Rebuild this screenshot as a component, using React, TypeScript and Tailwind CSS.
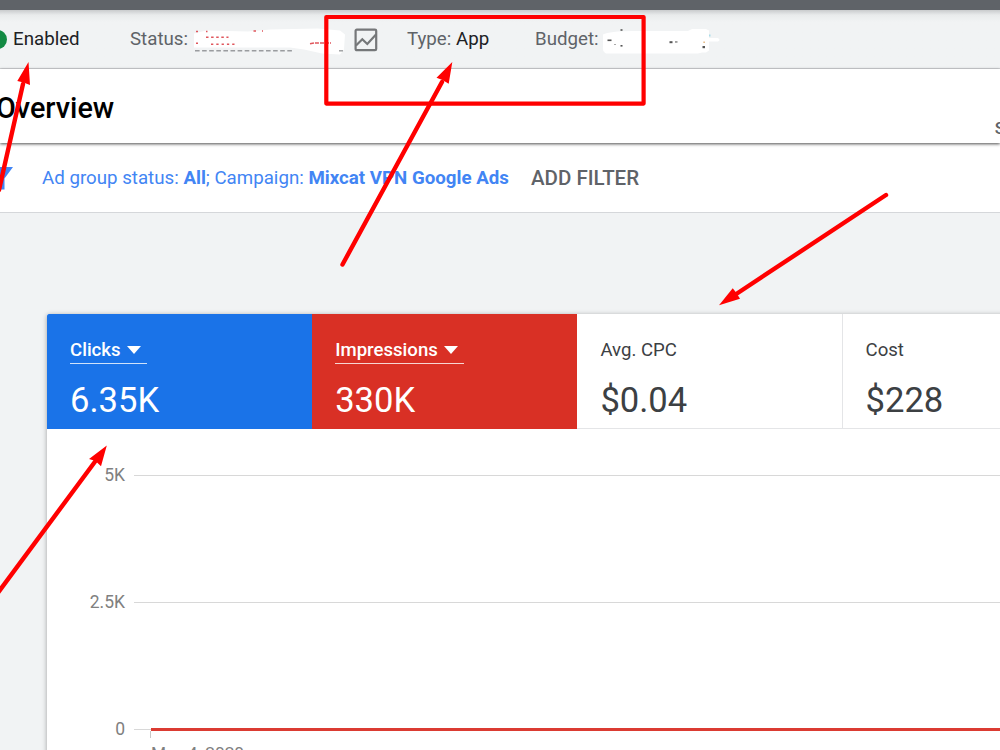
import type { ReactNode } from 'react';

interface Metric {
    label: string;
    value: string;
    selectable: boolean;
    tile: string;
}

interface ArrowProps {
    from: [number, number];
    to: [number, number];
    head: string;
}

const METRICS: Metric[] = [
    { label: 'Clicks', value: '6.35K', selectable: true, tile: 'bg-[#1a73e8] text-white rounded-tl-[2px]' },
    { label: 'Impressions', value: '330K', selectable: true, tile: 'bg-[#d93025] text-white' },
    { label: 'Avg. CPC', value: '$0.04', selectable: false, tile: 'bg-white text-[#3c4043] border-r border-b border-[#e4e5e7]' },
    { label: 'Cost', value: '$228', selectable: false, tile: 'bg-white text-[#3c4043] border-b border-[#e4e5e7]' },
];

const ARROWS: ArrowProps[] = [
    { from: [-1, 190], to: [23, 84], head: '28.5,62 17.3,81 23.5,82.5 30,85' },
    { from: [342.5, 264.5], to: [442, 82], head: '452.3,62 436.5,77.7 442.5,80 448.7,83.7' },
    { from: [886, 195], to: [737, 293.5], head: '719,305.2 732.7,288.3 736.5,293 740,298.7' },
    { from: [-3, 594], to: [95.5, 461], head: '106.8,445.5 89,459 95.5,461 101,466.3' },
];

const Arrow = ({ from, to, head }: ArrowProps) => (
    <g>
        <line x1={from[0]} y1={from[1]} x2={to[0]} y2={to[1]} stroke="#ff0000" strokeWidth="4.4" strokeLinecap="round" />
        <polygon points={head} fill="#ff0000" />
    </g>
);

const RedactedStatus = () => (
    <svg width="157" height="30" viewBox="190 25.5 157 30" className="shrink-0">
        <path
            d="M194 34 L206 31 L248 32 L270 30 L318 29 L340 31 L345 35 L344 50 L340 55 L322 54 L304 50 L290 48 L194 48 Z"
            fill="#fff"
        />
        <path d="M195 51.3H293" stroke="#9a9c9f" strokeWidth="1.4" strokeDasharray="4.6 2.5" />
        <path d="M339 51.3h4" stroke="#9a9c9f" strokeWidth="1.4" />
        <g fill="none" stroke="#e0565c" strokeWidth="1.5">
            <path d="M196 32h2M206 32h1.5M253.5 31.5h2.5M262 31.5h1" />
            <path d="M206 37.7h22.5" strokeDasharray="2.5 2.6" />
            <path d="M196 43.7h2M211 44.8h24" strokeDasharray="2.3 3" />
            <path d="M310 44.2l4-.7h5M320 43.5h11" strokeDasharray="4 1" />
        </g>
    </svg>
);

const RedactedBudget = () => (
    <svg width="122" height="34" viewBox="600 23.5 122 34" className="shrink-0">
        <path
            d="M603 35 Q610 31 640 31.5 L688 31.5 L692 29.5 H706 L709 31 V38.5 H718 Q721 40.5 718 42 H709 V51 L706 53 H702 L698 54 H606 Q602 52 603 46 Z"
            fill="#fff"
        />
        <g fill="#555">
            <rect x="607.5" y="40" width="4" height="1.6" />
            <rect x="620.5" y="29.7" width="2" height="1.6" />
            <rect x="620.5" y="45.5" width="2" height="1.6" />
            <rect x="614" y="44.5" width="2" height="1" opacity=".5" />
            <rect x="669.5" y="41.7" width="3" height="2" />
            <rect x="675" y="41.7" width="2.5" height="1.5" opacity=".7" />
            <rect x="702.5" y="46.5" width="2.5" height="2.2" />
            <rect x="703.5" y="42" width="1.2" height="1.5" fill="#d9a15c" />
            <rect x="709" y="35" width="1.5" height="2" fill="#a8dbe8" />
        </g>
    </svg>
);

const TrendIcon = () => (
    <svg width="24" height="24" viewBox="0 0 24 24" fill="none" stroke="#757779" strokeWidth="2.2" className="shrink-0">
        <rect x="1.6" y="1.6" width="20.6" height="20.6" rx="1.2" />
        <path d="M2 17.5L8.3 11.2L13.3 16L22 6.5" />
    </svg>
);

const InfoItem = ({ label, className, children }: { label: string; className: string; children?: ReactNode }) => (
    <div className={`flex shrink-0 items-center whitespace-pre pb-[2px] ${className}`}>
        <span className="text-[#5f6368]">{label}</span>
        {children}
    </div>
);

const StatusBar = () => (
    <div className="flex h-[59px] shrink-0 items-center overflow-hidden border-b border-[#d5d7da] bg-linear-to-b from-[#c9cbcd] via-[#e9ebec] via-[5px] to-[#f1f3f4] to-[12px] pt-[2px] text-[18.7px] leading-6">
        <div className="-ml-[12px] flex w-[142px] shrink-0 items-center gap-[6px] pb-[2px]">
            <span className="size-[19px] shrink-0 rounded-full bg-[#128a43]" />
            <span className="text-[#202124]">Enabled</span>
        </div>
        <InfoItem label="Status:" className="w-[60px]" />
        <RedactedStatus />
        <div className="ml-[7px] w-[53px] shrink-0">
            <TrendIcon />
        </div>
        <InfoItem label="Type: " className="w-[128px]">
            <span className="text-[#202124]">App</span>
        </InfoItem>
        <InfoItem label="Budget:" className="w-[65px]" />
        <RedactedBudget />
    </div>
);

const FilterBar = () => (
    <div className="flex h-[70px] shrink-0 items-center border-b border-[#d5d7da] bg-white text-[18.72px]">
        <svg width="14" height="24" viewBox="0 0 14 24" className="shrink-0">
            <path d="M-12 1H13L4.5 12.5V23.5H-3V12.5Z" fill="#4285f4" />
        </svg>
        <p className="ml-[28px] w-[489px] shrink-0 whitespace-nowrap pt-[2px] text-[#4285f4]">
            Ad group status: <b className="font-bold">All</b>; Campaign: <b className="font-bold">Mixcat VPN Google Ads</b>
        </p>
        <span className="whitespace-nowrap pt-[2px] text-[20.5px] font-medium text-[#5f6368]">ADD FILTER</span>
    </div>
);

const MetricTile = ({ label, value, selectable, tile }: Metric) => (
    <div className={`flex h-[115px] w-[265.2px] shrink-0 flex-col items-start pl-[23px] pt-[23px] ${tile}`}>
        <div className={`flex h-[27px] items-center gap-[6px] border-b text-[18.6px] ${selectable ? 'border-white/80 pr-[6px]' : 'border-transparent'}`}>
            <span className={`pt-[2px] ${selectable ? 'font-medium' : ''}`}>{label}</span>
            {selectable && (
                <svg width="14" height="8" viewBox="0 0 14 8">
                    <path d="M0 0H14L7 8Z" fill="currentColor" />
                </svg>
            )}
        </div>
        <span className="mt-[15px] text-[34.6px] leading-[42px]">{value}</span>
    </div>
);

const GridLine = ({ label, className }: { label: string; className: string }) => (
    <div className={`flex items-center ${className}`}>
        <span className="w-[78px] text-right text-[17.5px] leading-6 text-[#808080]">{label}</span>
        <span className="ml-[9px] h-px flex-1 bg-[#d8d8d8]" />
    </div>
);

const Chart = () => (
    <div className="flex flex-col bg-white">
        <GridLine label="5K" className="mt-[34px] h-6" />
        <GridLine label="2.5K" className="mt-[103px] h-6" />
        <div className="mt-[103px] flex h-6 items-center">
            <span className="w-[78px] text-right text-[17.5px] leading-6 text-[#808080]">0</span>
            <span className="ml-[9px] h-px w-[17px] bg-[#d8d8d8]" />
            <span className="h-[3px] flex-1 bg-[#db3b32]" />
        </div>
        <div className="-mt-[10px] ml-[103px] h-[7px] w-px bg-[#c8c8c8]" />
        <span className="ml-[104px] mt-[3px] text-[17.3px] leading-6 text-[#808080]">May 4, 2020</span>
    </div>
);

export default function App() {
    return (
        <div className="relative flex h-[750px] w-[1000px] flex-col overflow-hidden bg-[#f1f3f4] font-['Roboto',sans-serif]">
            <div className="h-[10px] shrink-0 bg-[#5f6368]" />
            <StatusBar />

            <div className="relative z-10 flex h-[74px] shrink-0 items-center justify-between bg-white shadow-[0_1px_3px_rgba(0,0,0,0.7)]">
                <h1 className="-ml-[4px] mt-[6px] text-[28.8px] font-medium text-black">Overview</h1>
                <span className="-mr-[5px] mt-[43px] text-[17px] font-medium leading-6 text-[#5f6368]">S</span>
            </div>

            <FilterBar />

            <div className="ml-[47px] mt-[101px] w-[1062px] shrink-0 rounded-tl-[2px] shadow-[0_1px_5px_rgba(0,0,0,0.35)]">
                <div className="flex bg-white">
                    {METRICS.map((metric) => (
                        <MetricTile key={metric.label} {...metric} />
                    ))}
                </div>
                <Chart />
            </div>

            {/* Annotations over the page */}
            <svg width="1000" height="750" viewBox="0 0 1000 750" className="pointer-events-none absolute inset-0 z-20">
                <rect x="326.3" y="17" width="317.3" height="86.6" fill="none" stroke="#ff0000" strokeWidth="4.2" strokeLinejoin="round" />
                {ARROWS.map((arrow) => (
                    <Arrow key={arrow.head} {...arrow} />
                ))}
            </svg>
        </div>
    );
}
